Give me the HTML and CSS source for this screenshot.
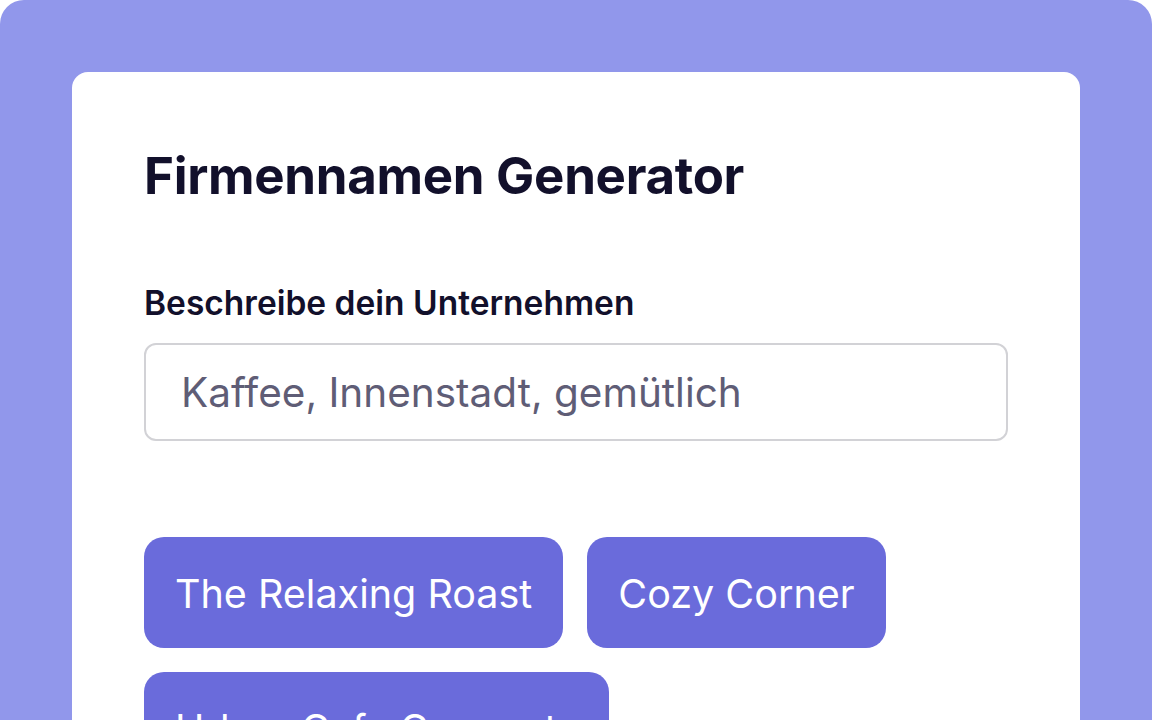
FILE: index.html
```html
<!DOCTYPE html>
<html lang="de">
<head>
    <meta charset="UTF-8">
    <meta name="viewport" content="width=device-width, initial-scale=1.0">
    <title>Firmennamen Generator</title>
    <link rel="stylesheet" href="styles.css">
</head>
<body>

<div class="frame">
    <div class="card">
        <h1>Firmennamen Generator</h1>

        <!-- Eingabe -->
        <label for="beschreibung">Beschreibe dein Unternehmen</label>
        <input type="text" id="beschreibung" placeholder="Kaffee, Innenstadt, gemütlich">

        <!-- Vorschläge -->
        <div class="names">
            <span class="name">The Relaxing Roast</span>
            <span class="name">Cozy Corner</span>
            <span class="name">Urban Cafe Connects</span>
        </div>
    </div>
</div>

</body>
</html>
```

FILE: styles.css
```css
body {
    font-family: 'Inter', 'Liberation Sans', sans-serif;
    background-color: #fff;
    margin: 0;
    padding: 0;
    color: #12102b;
    overflow: hidden;
}
.frame {
    background-color: #9197eb;
    border-radius: 24px 24px 0 0;
    padding: 72px 72px 0;
    height: 720px;
    box-sizing: border-box;
}
.card {
    background-color: #fff;
    border-radius: 16px 16px 0 0;
    padding: 73px 72px 0;
    height: 648px;
    box-sizing: border-box;
    overflow: hidden;
}
h1 {
    font-size: 51px;
    font-weight: 700;
    line-height: 1.2;
    margin: 0 0 77px;
    letter-spacing: -0.3px;
}
label {
    display: block;
    font-size: 33.5px;
    font-weight: 600;
    line-height: 1.2;
    margin-bottom: 20px;
}
input[type="text"] {
    display: block;
    width: 100%;
    box-sizing: border-box;
    height: 98px;
    border: 2px solid #d2d2d6;
    border-radius: 12px;
    padding: 0 35px;
    font-family: inherit;
    font-size: 40.5px;
    color: #12102b;
    outline: none;
}
input[type="text"]::placeholder {
    color: #5f5d76;
}
.names {
    display: flex;
    flex-wrap: wrap;
    gap: 24px;
    margin-top: 96px;
    max-width: 760px;
}
.name {
    background-color: #6a6bdb;
    color: #fff;
    font-size: 39.5px;
    line-height: 47px;
    padding: 34px 31px 30px;
    border-radius: 20px;
}
```
